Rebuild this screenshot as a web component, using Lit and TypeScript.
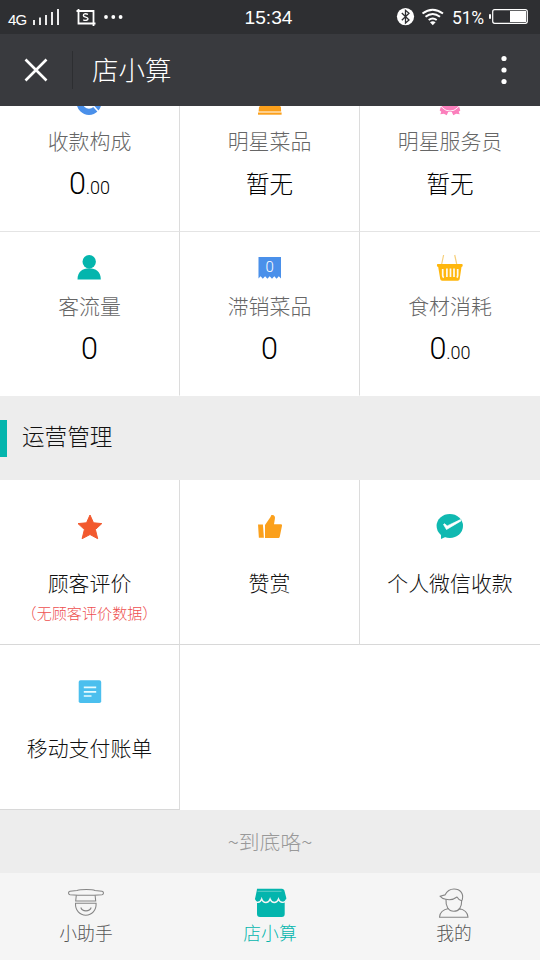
import { LitElement, html, svg, css, nothing } from "lit";
import { customElement, property } from "lit/decorators.js";

const icons = {
  pie: svg`<circle cx="13" cy="13.500" r="9.300" fill="none" stroke="#4a90ea" stroke-width="6.200"/><path d="M16 15.500l9 10" stroke="#fff" stroke-width="1.600"/>`,
  cloche: svg`<path d="M3.200 20.500a10.700 12 0 0 1 21.600 0z" fill="#fba01c"/><rect x="2" y="23.500" width="23.600" height="2.200" fill="#fba01c"/><path d="M3 18h21.800l.4 4.500H2.600z" fill="#fba01c"/>`,
  medal: svg`<path d="M6 14l-2.300 7.500 1.600 1.200-1 2.500 3.600-.4 2.800 1.400 1.500-3.200h3.600l1.500 3.200 2.800-1.400 3.600.4-1-2.500 1.600-1.200L22 14z" fill="#fb7fbc"/><circle cx="14" cy="11.500" r="10.500" fill="none" stroke="#fff" stroke-width=".9"/><circle cx="14" cy="11.500" r="9.500" fill="#fb7fbc"/>`,
  person: svg`<circle cx="13.200" cy="7.700" r="6.700" fill="#04b5ad"/><path d="M1.500 25.500c0-7.500 5-11.200 11.700-11.200s11.600 3.700 11.600 11.200z" fill="#04b5ad"/>`,
  ticket: svg`<path d="M2.500 3h22.500v21.500l-2.200-2.300-2.200 2.500-2.300-2.500-2.300 2.500-2.300-2.500-2.300 2.500-2.300-2.500-2.300 2.500-2.200-2.500-2.100 2.300z" fill="#4a90ea"/><text x="13.600" y="17.800" text-anchor="middle" class="digit">0</text>`,
  basket: svg`<path d="M7.600 1L5.700 10M18.700 1l2 9" stroke="#f6cf7a" stroke-width="1.200"/><path d="M1.500 10h24.600c.8 0 1 3-.6 3L23.700 25a2 2 0 0 1-2 1.800H6.200a2 2 0 0 1-2-1.800l-2-12c-1.600 0-1.500-3-.7-3z" fill="#ffb70d"/><path d="M6.700 15v6.500q0 1.500 1.200 2M10.900 14.600V23M14.500 14.600V23M18 14.600V23M21.700 15v6.500q0 1.500-1 2" fill="none" stroke="#fffaf0" stroke-width="1.700"/>`,
  star: svg`<path d="M14 2l3.500 7.800 8.300.8-6.400 5.900 2.300 9.200L14 21.500l-7.900 4.200 2.300-9.200-6.400-5.900 8.500-.8z" fill="#f2592e" stroke="#f2592e" stroke-linejoin="round"/>`,
  thumb: svg`<path d="M2 11.500h4.900l1 13.300H2.900z" fill="#fba01c"/><path d="M9 12l5.500-8c.6-1.700.8-2 1.800-2 2.200 0 3 1.800 2.600 3.800L18 11.200h6.700c1 0 1.500.7 1.300 1.600l-2.200 10.600c-.3 1-.8 1.500-1.800 1.500H9z" fill="#fba01c"/>`,
  pay: svg`<ellipse cx="13.800" cy="13" rx="13.200" ry="11.900" fill="#10b9b1"/><path d="M5 18v8l6-2.800z" fill="#10b9b1"/><path d="M7.500 11.500l3 5 14.500-8.600-.5-1.300-13.300 6.300-2.700-2.200z" fill="#fff" stroke="#fff" stroke-width=".7" stroke-linejoin="round"/>`,
  bill: svg`<rect x="2.700" y="2.300" width="22.500" height="22.700" rx="1.800" fill="#4bbfee"/><path d="M7.800 9.300h12.400M7.800 13.800h12.400M7.800 18h7.700" stroke="#e6fbff" stroke-width="1.700"/>`,
};

const tabIcons = {
  helper: svg`<g fill="none" stroke="#858585" stroke-width="1.050"><path d="M10 2.500C14 1.200 25 1.200 28 2.500l7 .8c2 .5 2 3.100 0 3.400-9 .7-23 .7-32 0-2-.3-2-2.900 0-3.400z"/><path d="M9.300 7.200l-.6 5.800h20l-.6-5.800M8.500 15.200h20.600c.3 7.200-4.200 12-10.300 12s-10.600-4.800-10.300-12z"/><path d="M13.800 19.500c1.500 4.500 8.800 4.500 10.400 0"/></g>`,
  shop: svg`<path d="M6 .8h25q1.600 0 2.300 1.500l1.900 7.200c.4 2.300-.2 3.700-1.500 4.400V26q0 3-3 3H9q-3 0-3-3V14.200c-2-1-2.500-2.500-1.700-4.700l1.500-7z" fill="#04b5ad"/><path d="M6.500 3.300h24" stroke="#7bd4cf" stroke-width=".8"/><path d="M3.400 11.500q1 3.300 3.700 2.800 2.500-.2 3.600-3.300 1.200 3.500 4.200 3.500t4.200-3.500q1.300 3.500 4.200 3.500t4.200-3.500q1.400 3.500 3.800 3.300 3 .4 4.300-3" fill="none" stroke="#f5f5f5" stroke-width="1.400"/>`,
  me: svg`<g fill="none" stroke="#858585" stroke-width="1.100" stroke-linejoin="round"><path d="M10.700 11.300C8.700 11 6.300 9.800 5 8.200l5-1.300C12 3 15 1 19 1c6.500 0 9.800 4.800 8.300 10.500l-.7 1.200c-2-.2-3.300-1.500-4.600-3.700-3 2.300-6.500 3.500-11.300 2.300z"/><path d="M11 11.300c-.5 7.200 2.500 12 7.800 12s8-4.300 7.900-10.800M13.800 20.500c-5.500 1-9 3.300-9.300 8.700h28.500c-.3-5.400-4-7.700-9.300-8.700"/></g>`,
};

type IconName = keyof typeof icons;

@customElement("status-bar")
class StatusBar extends LitElement {
  static styles = css`
    :host { display: flex; height: 34px; background: #2e2f32; color: #fff; align-items: center; font-family: Roboto, "Liberation Sans", sans-serif; }
    svg { display: block; }
    .side { flex: 1 1 0; display: flex; align-items: center; }
    .left { padding-left: 8px; }
    .right { justify-content: flex-end; padding-right: 12px; }
    .net { font-family: "Liberation Sans", sans-serif; font-weight: 400; font-size: 15px; width: 20px; padding-top: 4px; white-space: nowrap; letter-spacing: -.8px; }
    .time { font-family: "Liberation Sans", sans-serif; font-size: 19.200px; font-weight: 400; padding: 1px 0 0 1px; }
    .pct { font-size: 17.500px; font-weight: 400; letter-spacing: -.2px; width: 33px; margin: 1px 4px 0 6px; white-space: nowrap; }
  `;
  render() {
    return html`
      <div class="side left">
        <span class="net">4G</span>
        <svg width="100" height="34" viewBox="28 0 100 34" fill="none" stroke="#fff">
          <path d="M34 20v5M40 17.500V25M46 15v10M52 12v13M58 9v16" stroke-width="1.800"/>
          <path d="M76.500 11h17v15M78.500 9v14.500h17" stroke-width="1.800"/>
          <path d="M88 14.300c-2.800-1-4.600-.4-4.600 1.200 0 2.300 4.600 1 4.600 3.300 0 1.800-2.600 1.900-4.800 1" stroke-width="1.400"/>
          <g fill="#fff" stroke="none"><circle cx="106" cy="17" r="1.900"/><circle cx="113.300" cy="17" r="1.900"/><circle cx="120.600" cy="17" r="1.900"/></g>
        </svg>
      </div>
      <span class="time">15:34</span>
      <div class="side right">
        <svg width="50" height="34" viewBox="397 0 50 34" fill="none" stroke="#fff">
          <circle cx="406.500" cy="16.600" r="8.600" fill="#fff" stroke="none"/>
          <path d="M402.800 13l7.200 7-3.500 3V10.300l3.500 3-7.200 7" stroke="#2e2f32" stroke-width="1.300"/>
          <path d="M423.500 13.500q10-7.500 20.500 0M426.500 16.800q7.200-5.500 14.500 0M429.700 20q4-3 8 0" stroke-width="2"/>
          <path d="M431 22.200q2.800-1.800 5.600 0l-2.800 3z" fill="#fff" stroke="none"/>
        </svg>
        <span class="pct">51%</span>
        <svg width="39" height="34" viewBox="489 0 39 34">
          <rect x="489" y="14" width="2" height="5" rx="1" fill="#fff"/>
          <rect x="492.700" y="9.700" width="34.600" height="13.600" rx="2" fill="none" stroke="#fff" stroke-width="1.200"/>
          <rect x="510" y="11" width="16" height="11" fill="#fff"/>
        </svg>
      </div>`;
  }
}

@customElement("nav-bar")
class NavBar extends LitElement {
  static styles = css`
    :host { display: flex; align-items: center; height: 72px; background: #393a3e; color: #fff; }
    .close { width: 73px; display: flex; justify-content: center; border-right: 1px solid #2d2e31; height: 38px; align-items: center; box-sizing: border-box; }
    h1 { flex: 1; margin: 0; padding: 0 0 3px 19px; font-size: 26.500px; font-weight: 300; line-height: 40px; }
    .more { width: 73px; display: flex; justify-content: center; }
  `;
  render() {
    return html`
      <div class="close"><svg width="24" height="24" viewBox="0 0 24 24"><path d="M1.500 1.500l21 21M22.500 1.500l-21 21" stroke="#fff" stroke-width="2.600"/></svg></div>
      <h1>店小算</h1>
      <div class="more"><svg width="6" height="30" viewBox="0 0 6 30" fill="#fff"><circle cx="3" cy="3.500" r="2.600"/><circle cx="3" cy="15" r="2.600"/><circle cx="3" cy="26.500" r="2.600"/></svg></div>`;
  }
}

@customElement("grid-cell")
class GridCell extends LitElement {
  @property() icon: IconName = "pie";
  @property() label = "";
  @property() value = "";
  @property() fraction = "";
  @property() note = "";
  static styles = css`
    :host { display: flex; flex-direction: column; align-items: center; box-sizing: border-box; height: 165px; padding-top: 22px; border-right: 1px solid #dcdcdc; border-bottom: 1px solid #e4e4e4; background: #fff; white-space: nowrap; }
    :host([kind="action"]) { padding-top: 33px; border-bottom-color: #d8d8d8; }
    .icon { width: 28px; height: 28px; display: block; flex: none; }
    .digit { font: 300 15px Roboto, sans-serif; fill: #fff; }
    .label { margin-top: 8px; line-height: 30px; font-size: 20.900px; color: #666; }
    :host([kind="action"]) .label { margin-top: 26px; color: #111; }
    .value { margin-top: 8px; line-height: 40px; height: 40px; font-size: 23.600px; color: #000; }
    .number { font-family: Roboto, "Noto Sans CJK SC", sans-serif; font-size: 30.500px; font-weight: 300; padding-top: 1px; height: 39px; }
    .fraction { font-size: 18px; }
    .note { margin-top: 5px; line-height: 20px; font-size: 15.100px; color: #ee4f4f; }
    .paren { display: inline-block; width: 12px; }
    .paren.open { direction: rtl; unicode-bidi: bidi-override; }
  `;
  render() {
    const numeric = /^\d/.test(this.value);
    return html`
      <svg class="icon" viewBox="0 0 28 28">${icons[this.icon]}</svg>
      <div class="label">${this.label}</div>
      ${this.value ? html`<div class="value ${numeric ? "number" : ""}">${this.value}<span class="fraction">${this.fraction}</span></div>` : nothing}
      ${this.note ? html`<div class="note">${this.note}</div>` : nothing}`;
  }
}

@customElement("tab-bar")
class TabBar extends LitElement {
  static styles = css`
    :host { display: grid; grid-template-columns: 172px 196px 172px; height: 87px; background: #f5f5f5; }
    .tab { display: flex; flex-direction: column; align-items: center; padding-top: 15px; font-size: 17.800px; line-height: 26px; color: #555; }
    .tab svg { width: 38px; height: 30px; margin-bottom: 1px; }
    .active { color: #04b5ad; }
  `;
  render() {
    return html`
      <div class="tab"><svg viewBox="0 0 38 30">${tabIcons.helper}</svg>小助手</div>
      <div class="tab active"><svg viewBox="0 0 38 30">${tabIcons.shop}</svg>店小算</div>
      <div class="tab"><svg viewBox="0 0 38 30">${tabIcons.me}</svg>我的</div>`;
  }
}

@customElement("app-root")
class AppRoot extends LitElement {
  static styles = css`
    :host { display: flex; flex-direction: column; height: 960px; width: 540px; overflow: hidden; background: #ededed; font-family: "Noto Sans CJK SC", sans-serif; font-weight: 300; }
    .view { height: 767px; overflow: hidden; display: flex; flex-direction: column; }
    .scrolled { margin-top: -39px; }
    .grid { display: grid; grid-template-columns: repeat(3, 180px); background: #fff; flex: none; }
    .last-col { border-right: 0; }
    .last-row { height: 164px; border-bottom-color: transparent; }
    .heading { height: 84px; flex: none; display: flex; align-items: center; }
    .heading::before { content: ""; width: 7px; height: 37px; background: #04b5ad; }
    h2 { margin: 0 0 0 15px; padding-bottom: 4px; font-size: 22.600px; font-weight: 300; line-height: 34px; color: #111; }
    .end { height: 62px; padding-bottom: 1px; display: flex; align-items: center; justify-content: center; font-size: 20.800px; color: #999; }
  `;
  render() {
    return html`
      <status-bar></status-bar>
      <nav-bar></nav-bar>
      <main class="view">
        <section class="grid scrolled">
          <grid-cell icon="pie" label="收款构成" value="0" fraction=".00"></grid-cell>
          <grid-cell icon="cloche" label="明星菜品" value="暂无"></grid-cell>
          <grid-cell class="last-col" icon="medal" label="明星服务员" value="暂无"></grid-cell>
          <grid-cell class="last-row" icon="person" label="客流量" value="0"></grid-cell>
          <grid-cell class="last-row" icon="ticket" label="滞销菜品" value="0"></grid-cell>
          <grid-cell class="last-col last-row" icon="basket" label="食材消耗" value="0" fraction=".00"></grid-cell>
        </section>
        <div class="heading"><h2>运营管理</h2></div>
        <section class="grid">
          <grid-cell kind="action" icon="star" label="顾客评价" note="（无顾客评价数据）"></grid-cell>
          <grid-cell kind="action" icon="thumb" label="赞赏"></grid-cell>
          <grid-cell kind="action" class="last-col" icon="pay" label="个人微信收款"></grid-cell>
          <grid-cell kind="action" icon="bill" label="移动支付账单"></grid-cell>
        </section>
        <div class="end">~到底咯~</div>
      </main>
      <tab-bar></tab-bar>`;
  }
}
